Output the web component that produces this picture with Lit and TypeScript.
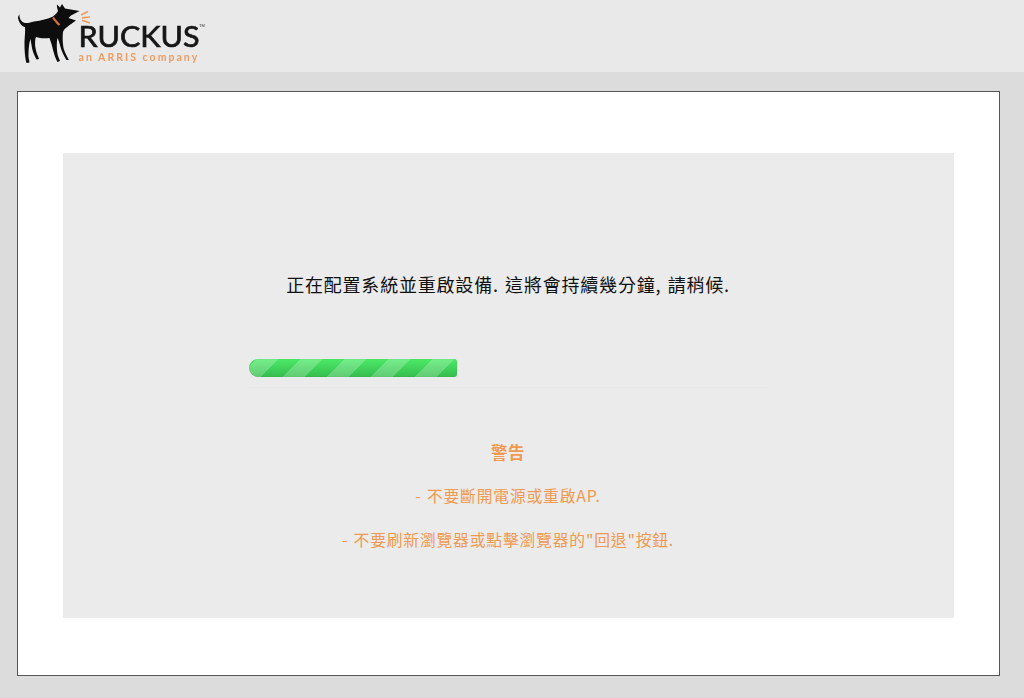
import { LitElement, html, css } from "lit";
import { customElement } from "lit/decorators.js";

@customElement("app-root")
export class AppRoot extends LitElement {
  static styles = css`
    :host { display: block; height: 698px; overflow: hidden; background: #dcdcdc; font-family: "Lato", "Noto Sans CJK TC", sans-serif; }
    .header { height: 72px; background: #e9e9e9; display: flex; align-items: flex-start; padding-left: 17px; box-sizing: border-box; }
    .logo { display: block; width: 190px; height: 66px; filter: blur(0.35px); }
    .ruck { font-family: "Lato", sans-serif; font-size: 28.500px; font-weight: 400; fill: #161616; stroke: #161616; stroke-width: .7px; }
    .arris { font-family: "Lato", sans-serif; font-size: 10.500px; font-weight: 700; fill: #ee9c60; letter-spacing: 1.300px; }
    .tm { font-family: "Liberation Sans", sans-serif; font-size: 4px; fill: #333; }
    .page { padding: 19px 24px 0 17px; }
    .card { height: 585px; box-sizing: border-box; border: 1px solid #555; background: #fff; padding: 61px 45px 0 45px; }
    .panel { height: 465px; background: #ebebeb; display: flex; flex-direction: column; align-items: center; box-sizing: border-box; padding-top: 118px; }
    .msg { font-family: "Noto Sans CJK TC", sans-serif; font-size: 18px; line-height: 26px; color: #111; white-space: nowrap; letter-spacing: .8px; word-spacing: 1.500px; margin-left: -1px; }
    .progress { width: 518px; height: 29px; margin-top: 62px; margin-left: -2px; box-sizing: border-box; border-bottom: 1px solid #e6e6e6; }
    .bar { width: 208px; height: 18px; border-radius: 9px 3px 3px 9px; background-color: #40d75a;
      background-image: linear-gradient(135deg, rgba(255,255,255,.22) 25%, transparent 25%, transparent 50%, rgba(255,255,255,.22) 50%, rgba(255,255,255,.22) 75%, transparent 75%), linear-gradient(#4cea68, #36bd4e);
      background-size: 44px 44px, 100% 100%; background-position: 8px 0, 0 0; box-shadow: inset 0 0 1px rgba(20,110,40,.4); }
    .warn { margin-top: 51px; display: flex; flex-direction: column; align-items: center; gap: 18px; color: #f0994f; font-family: "Noto Sans CJK TC", sans-serif; font-size: 15.800px; font-weight: 400; line-height: 26px; white-space: nowrap; letter-spacing: .8px; margin-left: -1px; word-spacing: 1px; }
    .warn b { font-size: 16.500px; font-weight: 700; letter-spacing: .4px; }
  `;
  render() {
    return html`
      <div class="header">
        <svg class="logo" viewBox="17 0 190 66" aria-label="Ruckus">
          <path fill="#0d0d0d" d="M19.500 14 C19 18 21 22 25 23 C28 23.500 31 22 34 21.500 C41 20.500 48 19 53 16.500 C55 15 57 13 58 11 C57.500 9 56.500 6.500 57 4.500 L60 7.500 L62 4 L65 8.500 L79.500 11 L71 15.500 L68.500 18 L76 20.500 L69 25.500 C66 28 64 29 63 32 C62.500 36 62.500 42 63.500 48 C64.500 52 66.500 55 68 58.500 L69 60 L66.500 60 C64.500 57 61.500 51 60.500 47 C59.500 43 58.500 40 57.500 38 C56.500 42 56.500 50 58 56 L60 61 L57.500 62 C55 58 53 50 51.500 44 C50.500 41 50 39.500 49.500 38 C45 38.500 40 38.500 36 37 C35 39 34.800 44 35.500 48 C36 52 38 56 39 59 L36.500 59.500 C34 55 32 50 31.500 45 L30.500 39 C29 43 28.500 50 28.500 57 L29.500 62.500 L26.500 63 C25 58 24.500 50 24.500 44 C24.500 38 25.500 31 25 27 C22 26.500 18 22 18 17 Z"/>
          <path fill="none" stroke="#d9713a" stroke-width="2.200" d="M53 17.500 C55 20 57 23 59.500 25"/>
          <path fill="none" stroke="#ef9a5c" stroke-width="1.700" d="M81 15 L88 11.500 M82 17.800 L90 17 M82 20.200 L90 23"/>
          <text class="ruck" x="78.500" y="47" textLength="121" lengthAdjust="spacingAndGlyphs">RUCKUS</text>
          <text class="tm" x="199" y="27">TM</text>
          <text class="arris" x="78.500" y="61" textLength="120">an ARRIS company</text>
        </svg>
      </div>
      <div class="page">
        <div class="card">
          <div class="panel">
            <div class="msg">正在配置系統並重啟設備. 這將會持續幾分鐘, 請稍候.</div>
            <div class="progress"><div class="bar"></div></div>
            <div class="warn">
              <b>警告</b>
              <div>- 不要斷開電源或重啟AP.</div>
              <div>- 不要刷新瀏覽器或點擊瀏覽器的"回退"按鈕.</div>
            </div>
          </div>
        </div>
      </div>
    `;
  }
}
